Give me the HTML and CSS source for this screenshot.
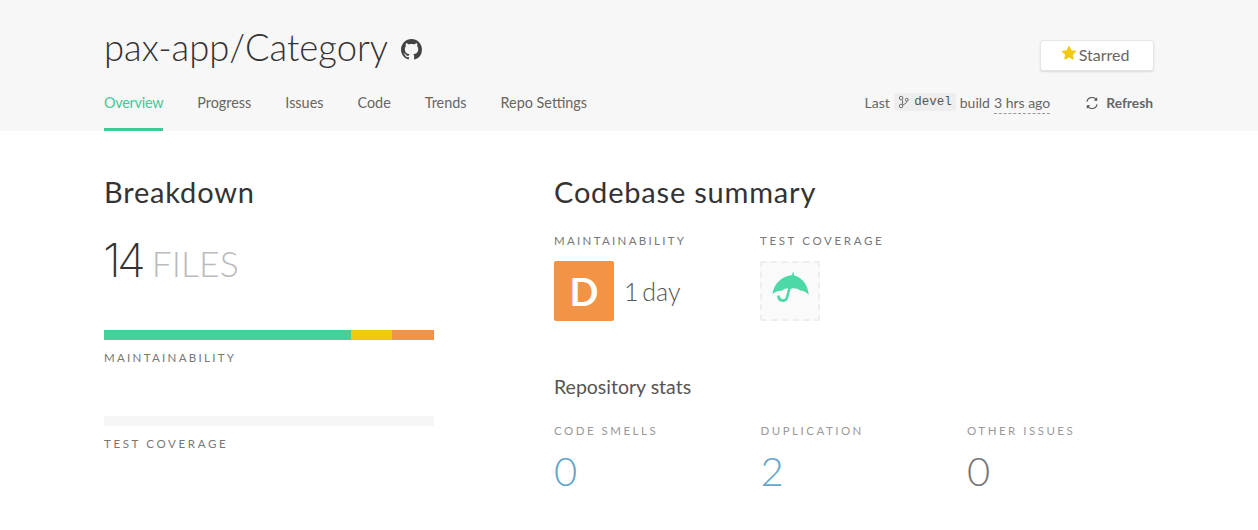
FILE: index.html
```html
<!DOCTYPE html>
<html lang="en">
<head>
<meta charset="utf-8">
<title>pax-app/Category</title>
<link rel="stylesheet" href="styles.css">
</head>
<body>
<header class="header">
  <div class="container">
    <div class="top">
      <div class="title-wrap">
        <h1 class="title">pax-app/Category</h1>
        <svg class="gh" viewBox="0 0 16 16" width="21" height="21"><path fill="#444" d="M8 0C3.58 0 0 3.58 0 8c0 3.54 2.29 6.53 5.47 7.59.4.07.55-.17.55-.38 0-.19-.01-.82-.01-1.49-2.01.37-2.53-.49-2.69-.94-.09-.23-.48-.94-.82-1.13-.28-.15-.68-.52-.01-.53.63-.01 1.08.58 1.23.82.72 1.21 1.87.87 2.33.66.07-.52.28-.87.51-1.07-1.78-.2-3.64-.89-3.64-3.95 0-.87.31-1.59.82-2.15-.08-.2-.36-1.02.08-2.12 0 0 .67-.21 2.2.82.64-.18 1.32-.27 2-.27s1.36.09 2 .27c1.53-1.04 2.2-.82 2.2-.82.44 1.1.16 1.92.08 2.12.51.56.82 1.27.82 2.15 0 3.07-1.87 3.75-3.65 3.95.29.25.54.73.54 1.48 0 1.07-.01 1.93-.01 2.2 0 .21.15.46.55.38A8.01 8.01 0 0 0 16 8c0-4.42-3.58-8-8-8z"/></svg>
      </div>
      <button class="star-btn">
        <svg class="star" viewBox="0 0 24 24" width="16" height="16"><path fill="#f1ca0f" stroke="#f1ca0f" stroke-width="2" stroke-linejoin="round" d="M12 2.5l2.9 6.2 6.8.8-5 4.6 1.3 6.7-6-3.4-6 3.4 1.3-6.7-5-4.6 6.8-.8z"/></svg>
        <span>Starred</span>
      </button>
    </div>
    <div class="nav-row">
      <nav class="tabs">
        <a class="tab tab-active">Overview</a>
        <a class="tab">Progress</a>
        <a class="tab">Issues</a>
        <a class="tab">Code</a>
        <a class="tab">Trends</a>
        <a class="tab">Repo Settings</a>
      </nav>
      <div class="build">
        <span>Last</span>
        <code class="branch"><svg viewBox="0 0 13 15" width="12" height="14"><g fill="none" stroke="#666" stroke-width="1.1"><circle cx="3.500" cy="3" r="2"/><circle cx="3.500" cy="12" r="2"/><circle cx="10" cy="5" r="1.600"/><path d="M4.500 5c1 2 1 3 .3 5M10 6.600c0 3-3 3-5 4.400"/></g></svg><span>devel</span></code>
        <span>build</span>
        <span class="ago">3 hrs ago</span>
        <a class="refresh">
          <svg viewBox="0 0 16 16" width="14" height="14"><g fill="none" stroke="#555" stroke-width="1.2"><path d="M2.200 6.500A6 6 0 0 1 13 4.200"/><path d="M13.800 9.500A6 6 0 0 1 3 11.800"/></g><path fill="#555" d="M14 1.500v4h-4zM2 14.500v-4h4z"/></svg>
          <span>Refresh</span>
        </a>
      </div>
    </div>
  </div>
</header>
<main class="container columns">
  <section class="left">
    <h2 class="h2">Breakdown</h2>
    <div class="files"><span class="files-n">14</span><span class="files-l">FILES</span></div>
    <div class="bar">
      <div class="seg seg-g"></div>
      <div class="seg seg-y"></div>
      <div class="seg seg-o"></div>
    </div>
    <div class="label label-dark label-m">MAINTAINABILITY</div>
    <div class="bar bar-empty"></div>
    <div class="label label-dark label-t label-wide">TEST COVERAGE</div>
  </section>
  <section class="right">
    <h2 class="h2">Codebase summary</h2>
    <div class="summary">
      <div class="sum-col">
        <div class="label label-dark">MAINTAINABILITY</div>
        <div class="grade-row">
          <div class="grade">D</div>
          <div class="grade-text">1 day</div>
        </div>
      </div>
      <div class="sum-col">
        <div class="label label-dark label-wide">TEST COVERAGE</div>
        <div class="grade-row">
          <div class="nocov">
            <svg viewBox="2 2 56 56" width="56" height="56"><path fill="#4dd9a5" d="M12.500 33C13.500 23 22 15 32.200 14l.3-2.500 1.500.2-.2 2.500C42 16 48 24 48.800 34c-2.500-3-5.500-4.500-8.800-4.500-2-2-6-2.800-8.800-1.800-3.500-1-7-.3-9.200 2-3.500-.4-7 1-9.500 3.300z"/><path fill="none" stroke="#4dd9a5" stroke-width="2.600" stroke-linecap="round" d="M29.500 27l-2.500 9.500c-1.200 4.500-8 4-8.500-1"/></svg>
          </div>
        </div>
      </div>
    </div>
    <h3 class="h3">Repository stats</h3>
    <div class="stats">
      <div class="stat"><div class="label label-light">CODE SMELLS</div><div class="num num-blue">0</div></div>
      <div class="stat"><div class="label label-light">DUPLICATION</div><div class="num num-blue">2</div></div>
      <div class="stat"><div class="label label-light">OTHER ISSUES</div><div class="num num-gray">0</div></div>
    </div>
  </section>
</main>
</body>
</html>
```
FILE: styles.css
```css
* { box-sizing: border-box; }
html, body { margin: 0; padding: 0; }
body { background: #fff; color: #333; font-family: "Lato", "Open Sans", "Liberation Sans", sans-serif; height: 530px; overflow: hidden; }
.container { width: 1050px; margin-left: 104px; }
.header { background: #f7f7f7; height: 131px; }
.top { display: flex; justify-content: space-between; height: 80px; }
.title-wrap { display: flex; align-items: center; gap: 13px; height: 70px; padding-top: 24px; }
.title { margin: 0; font-size: 36.400px; font-weight: 300; color: #333; line-height: 48px; }
.gh { margin-top: 4px; }
.star-btn { margin-top: 40px; width: 114px; height: 31px; background: #fff; border: 1px solid #e6e6e6; border-radius: 3px; box-shadow: 0 1px 2px rgba(0,0,0,.12); display: flex; align-items: center; justify-content: center; gap: 2px; padding: 0 4px 2px 0; font: 400 16px "Lato", sans-serif; color: #666; }
.star { margin-top: -3px; }
.nav-row { display: flex; justify-content: space-between; height: 51px; }
.tabs { display: flex; gap: 34px; }
.tab { display: block; height: 51px; padding-top: 14px; font-size: 14.400px; line-height: 18px; color: #666; }
.tab-active { color: #45c896; border-bottom: 3px solid #45c896; font-weight: 400; letter-spacing: -.25px; }
.build { display: flex; align-items: flex-start; padding-top: 14px; font-size: 14px; line-height: 18px; color: #666; gap: 4px; }
.branch { display: flex; align-items: center; gap: 5px; width: 62px; height: 18px; margin-top: -1px; padding: 0 4px; background: #eee; border-radius: 3px; font: 12.500px/18px "Liberation Mono", monospace; color: #555; }
.ago { border-bottom: 1px dashed #999; height: 20px; line-height: 18px; }
.refresh { display: flex; align-items: center; gap: 7px; margin-left: 31px; padding-right: 1px; font-weight: 700; font-size: 13.800px; color: #666; height: 18px; }
.columns { display: flex; }
.left { flex: none; width: 450px; }
.right { flex: none; width: 600px; }
.h2 { margin: 0; padding-top: 43px; font-size: 29px; font-weight: 400; line-height: 36px; color: #333; letter-spacing: .8px; }
.files { display: flex; align-items: baseline; margin-top: 24px; height: 52px; line-height: 52px; }
.files-n { font-family: "Inter", "Lato", sans-serif; font-size: 47px; font-weight: 200; color: #333; letter-spacing: -4px; margin-left: -1px; }
.files-l { font-size: 35.600px; font-weight: 300; color: #bbb; margin-left: 10px; }
.bar { display: flex; width: 330px; height: 10px; margin-top: 44px; }
.seg { height: 10px; }
.seg-g { width: 247px; background: #45d09a; }
.seg-y { width: 41px; background: #f1ca0f; }
.seg-o { width: 42px; background: #f39345; }
.bar-empty { background: #f6f6f6; margin-top: 51px; }
.label { font-size: 11.500px; letter-spacing: 2.300px; line-height: 14px; white-space: nowrap; }
.label-dark { color: #777; }
.label-light { color: #999; letter-spacing: 2.500px; }
.label-wide { letter-spacing: 2.650px; }
.label-m { margin-top: 11px; }
.label-t { margin-top: 11px; }
.summary { display: flex; margin-top: 24px; }
.sum-col { width: 206px; }
.grade-row { display: flex; align-items: center; gap: 10px; margin-top: 13px; }
.grade { width: 60px; height: 60px; background: #f39345; border-radius: 2px; color: #fff; font-size: 38px; font-weight: 700; text-align: center; line-height: 60px; }
.grade-text { font-size: 25px; font-weight: 300; color: #555; word-spacing: -3px; }
.nocov { width: 60px; height: 60px; border: 2px dashed #eee; background: #fafafa; border-radius: 2px; }
.nocov svg { display: block; }
.h3 { margin: 0; margin-top: 53px; font-size: 19.500px; font-weight: 400; line-height: 26px; color: #555; }
.stats { display: flex; margin-top: 24px; }
.stat { flex: none; width: 206.500px; }
.num { font-size: 40px; font-weight: 300; line-height: 50px; margin-top: 8px; }
.num-blue { color: #62a6cc; }
.num-gray { color: #777; }
```
